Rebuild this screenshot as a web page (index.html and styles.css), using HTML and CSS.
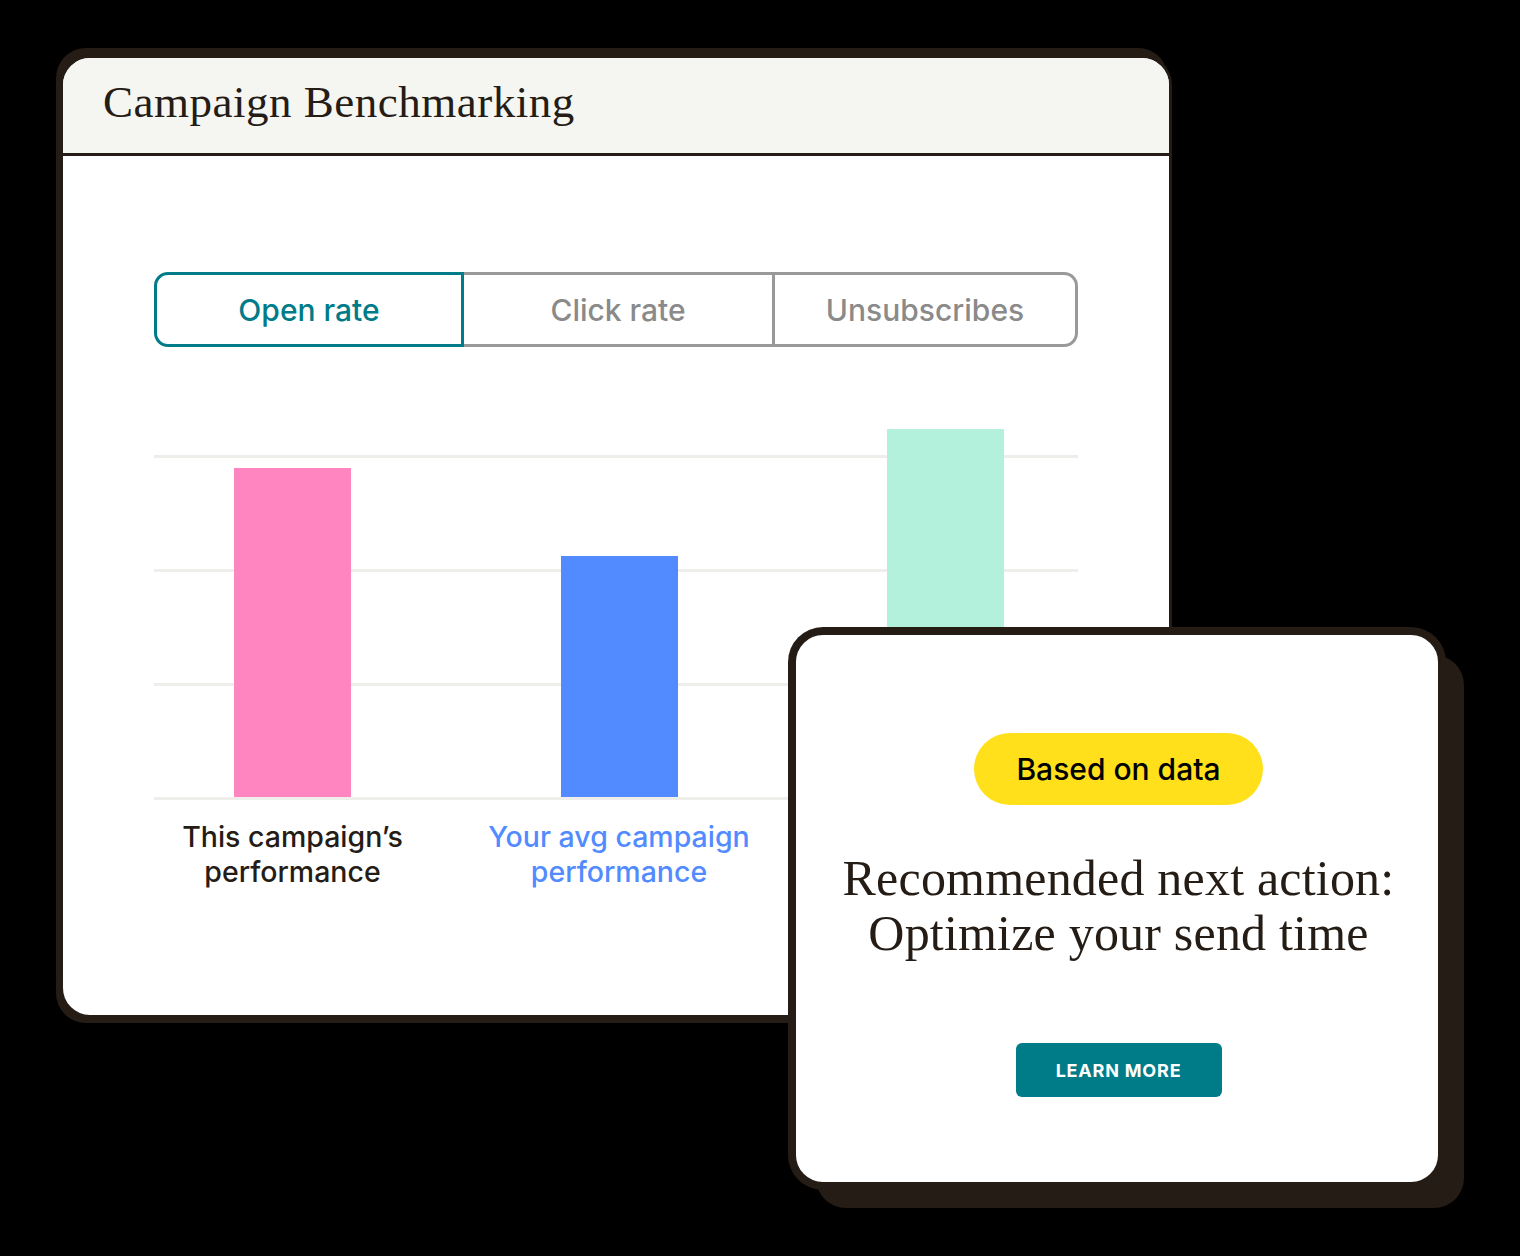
FILE: index.html
```html
<!DOCTYPE html>
<html lang="en">
<head>
<meta charset="utf-8">
<title>Campaign Benchmarking</title>
<link rel="stylesheet" href="styles.css">
</head>
<body>
<div class="stage">
  <section class="window bench">
    <header class="bench-head">
      <h1 class="bench-title">Campaign Benchmarking</h1>
    </header>
    <div class="bench-body">
      <div class="tabs">
        <div class="tab tab-active">Open rate</div>
        <div class="tab tab-mid">Click rate</div>
        <div class="tab tab-last">Unsubscribes</div>
      </div>
      <div class="chart">
        <div class="col"><div class="bar bar-pink" style="height:329px"></div></div>
        <div class="col"><div class="bar bar-blue" style="height:241px"></div></div>
        <div class="col"><div class="bar bar-mint" style="height:368px"></div></div>
      </div>
      <div class="labels">
        <div class="label label-dark">This campaign’s<br>performance</div>
        <div class="label label-blue">Your avg campaign<br>performance</div>
      </div>
    </div>
  </section>

  <section class="window reco">
    <div class="pill">Based on data</div>
    <h2 class="reco-title">Recommended next action:<br>Optimize your send time</h2>
    <div class="btn">LEARN MORE</div>
  </section>
</div>
</body>
</html>
```
FILE: styles.css
```css
* { box-sizing: border-box; }

html, body {
  margin: 0;
  padding: 0;
  background: #000;
}

body {
  width: 1520px;
  height: 1256px;
  overflow: hidden;
  font-family: Inter, "Liberation Sans", sans-serif;
  color: #241c15;
}

.stage {
  position: relative;
  width: 1520px;
  height: 1256px;
}

.window {
  position: absolute;
  background: #fff;
  border: 3px solid #241c15;
}

/* ---------- Benchmark window ---------- */
.bench {
  z-index: 1;
  left: 60px;
  top: 55px;
  width: 1112px;
  height: 963px;
  border-radius: 30px;
  box-shadow: -4px -7px 0 #241c15, -4px 5px 0 #241c15;
  overflow: hidden;
}

.bench-head {
  height: 98px;
  background: #f5f5f2;
  border-bottom: 3px solid #241c15;
  padding: 19px 0 0 40px;
}

.bench-title {
  margin: 0;
  font-family: "Liberation Serif", serif;
  font-weight: 400;
  font-size: 45px;
  line-height: 50px;
  letter-spacing: 0.5px;
  color: #241c15;
}

.bench-body {
  padding: 116px 0 0 91px;
}

.tabs {
  display: flex;
  width: 924px;
  height: 75px;
}

.tab {
  display: flex;
  align-items: center;
  justify-content: center;
  font-size: 30px;
  font-weight: 500;
  color: #8a8a8a;
  border: 3px solid #999;
}

.tab-active {
  width: 310px;
  color: #007c89;
  border-color: #007c89;
  border-radius: 14px 0 0 14px;
}

.tab-mid {
  width: 311px;
  border-left: none;
}

.tab-last {
  width: 303px;
  border-left: none;
  border-radius: 0 14px 14px 0;
}

.chart {
  margin-top: 82px;
  width: 924px;
  height: 371px;
  padding-bottom: 3px;
  display: grid;
  grid-template-columns: repeat(3, 277px);
  column-gap: 49.5px;
  align-items: end;
  position: relative;
}

.chart::before {
  content: "";
  position: absolute;
  left: 0;
  right: 0;
  top: 26px;
  bottom: 0;
  background: repeating-linear-gradient(to bottom, #efeeea 0, #efeeea 3px, transparent 3px, transparent 114px);
}

.col {
  position: relative;
  display: flex;
  justify-content: center;
  align-items: flex-end;
  height: 100%;
}

.bar { width: 117px; }
.bar-pink { background: #ff85c1; }
.bar-blue { background: #528bff; }
.bar-mint { background: #b4f1dc; }

.labels {
  margin-top: 19px;
  display: grid;
  grid-template-columns: repeat(3, 277px);
  column-gap: 49.5px;
}

.label {
  text-align: center;
  font-size: 28.5px;
  font-weight: 500;
  line-height: 35px;
  white-space: nowrap;
}

.label-dark { color: #241c15; }
.label-blue { color: #528bff; }

/* ---------- Recommendation window ---------- */
.reco {
  z-index: 2;
  left: 793px;
  top: 632px;
  width: 648px;
  height: 553px;
  border-radius: 30px;
  box-shadow: 0 0 0 5px #241c15, 23px 23px 0 #241c15;
  display: flex;
  flex-direction: column;
  align-items: center;
  padding: 98px 0 0 3px;
}

.pill {
  height: 72px;
  padding: 0 42px;
  border-radius: 36px;
  background: #ffe01b;
  display: flex;
  align-items: center;
  font-size: 30px;
  font-weight: 500;
  color: #000;
}

.reco-title {
  margin: 46px 0 0;
  font-family: "Liberation Serif", serif;
  font-weight: 400;
  font-size: 50px;
  line-height: 55px;
  text-align: center;
  color: #241c15;
  letter-spacing: 0.2px;
}

.btn {
  margin-top: 82px;
  width: 206px;
  height: 54px;
  border-radius: 6px;
  background: #007c89;
  color: #fff;
  display: flex;
  align-items: center;
  justify-content: center;
  font-size: 18px;
  font-weight: 700;
  letter-spacing: 0.8px;
}
```
